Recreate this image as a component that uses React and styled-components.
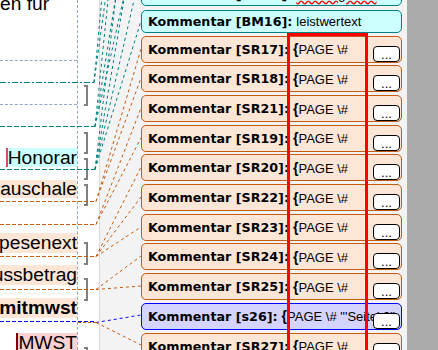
import React from "react";
import styled, { createGlobalStyle } from "styled-components";

// Word-Markup: Dokumentseite links, Kommentar-Sprechblasen rechts

const GlobalStyle = createGlobalStyle`
  html, body {
    margin: 0;
    padding: 0;
  }
  body {
    background: #fff;
    font-family: "Liberation Sans", Arial, sans-serif;
  }
`;

const kinds = {
  teal: { fill: "#ccffff", line: "#008080" },
  orange: { fill: "#fde6d6", line: "#c55a11" },
  blue: { fill: "#d4d4ff", line: "#0000ff" },
};

const Root = styled.div`
  position: relative;
  display: flex;
  width: 438px;
  height: 350px;
  overflow: hidden;
`;

const DocPage = styled.div`
  display: flex;
  flex: none;
  width: 99px;
  background: #fff;
  border-right: 1px solid #d9d9d9;
`;

const TextColumn = styled.div`
  display: flex;
  flex-direction: column;
  width: 77px;
  border-right: 1px dashed #8ea6c8;
  overflow: hidden;
  font-family: "Liberation Sans", Arial, sans-serif;
  font-size: 19.2px;
  color: #000;
`;

const DocLine = styled.div`
  display: flex;
  flex: none;
  justify-content: ${(p) => (p.$left ? "flex-start" : "flex-end")};
  height: ${(p) => p.$h}px;
  margin-top: ${(p) => p.$mt}px;
  white-space: nowrap;
  overflow: hidden;
`;

const Highlight = styled.span`
  flex: none;
  line-height: ${(p) => p.$h}px;
  background: ${(p) => p.$bg || "transparent"};
  font-weight: ${(p) => (p.$bold ? "bold" : "normal")};
  border-left: ${(p) => (p.$mark ? `2px solid ${p.$mark}` : "none")};
`;

const Rule = styled.div`
  flex: none;
  height: 0;
  margin-top: ${(p) => p.$mt}px;
  border-top: 1px dashed #8ea6c8;
`;

const Gutter = styled.div`
  display: flex;
  flex-direction: column;
  width: 21px;
`;

const Bracket = styled.div`
  flex: none;
  width: 2px;
  height: ${(p) => p.$h}px;
  margin: ${(p) => p.$mt}px 0 0 6px;
  border: 2px solid #808080;
  border-left: none;
`;

const Pane = styled.div`
  position: relative;
  flex: 1;
  background: #f3f3f3;
  padding: 0 5px 0 41px;
  overflow: hidden;
`;

const BalloonColumn = styled.div`
  display: flex;
  flex-direction: column;
  gap: 2.7px;
`;

const Balloon = styled.div`
  position: relative;
  z-index: 2;
  display: flex;
  align-items: ${(p) => (p.$cut ? "flex-end" : "center")};
  box-sizing: border-box;
  flex: none;
  height: ${(p) => p.$h}px;
  margin-top: ${(p) => p.$mt || 0}px;
  padding: 0 6px ${(p) => (p.$cut ? 3 : 0)}px 6px;
  background: ${(p) => kinds[p.$kind].fill};
  border: 1px solid ${(p) => kinds[p.$kind].line};
  border-radius: 5px;
  white-space: nowrap;
  overflow: hidden;
`;

const Label = styled.span`
  font-family: "DejaVu Sans", Verdana, sans-serif;
  font-weight: bold;
  font-size: 12.7px;
  color: #000;
`;

const Content = styled.span`
  margin-left: 4px;
  font-family: "Liberation Sans", Arial, sans-serif;
  font-size: 13px;
  color: #000;

  b {
    font-size: 14px;
  }
`;

const Misspelled = styled.span`
  text-decoration: underline wavy #ff0000;
`;

const MoreButton = styled.div`
  position: absolute;
  right: 1px;
  bottom: 0;
  display: flex;
  align-items: flex-end;
  justify-content: center;
  box-sizing: border-box;
  width: 27px;
  height: 16px;
  background: #fff;
  border: 1px solid #000;
  border-radius: 4px;
  font-family: "Liberation Sans", Arial, sans-serif;
  font-size: 13px;
  line-height: 12px;
  color: #000;
`;

const FieldFrame = styled.div`
  position: absolute;
  z-index: 3;
  left: 187px;
  top: 33px;
  box-sizing: border-box;
  width: 81px;
  height: 340px;
  border: 3px solid #ff0000;
  border-bottom: none;
`;

const ScrollArea = styled.div`
  flex: none;
  width: 31px;
  background: #ababab;
`;

const Connectors = styled.svg`
  position: absolute;
  z-index: 1;
  left: 0;
  top: 0;
  pointer-events: none;
`;

const docLines = [
  { text: "en fur", left: true, h: 22, mt: -7 },
  { rule: true, mt: 45 },
  { rule: true, mt: 43 },
  { text: "Honorar", h: 19, mt: 43, bg: kinds.teal.fill, mark: "#d0506a" },
  { text: "Auslagenpauschale", h: 18, mt: 13, bg: kinds.orange.fill },
  { text: "Spesenext", h: 20, mt: 35, bg: kinds.orange.fill },
  { text: "Vorschussbetrag", h: 20, mt: 12, bg: kinds.orange.fill },
  { text: "summemitmwst", h: 20, mt: 13, bg: kinds.orange.fill, bold: true },
  { text: "MWST", h: 19, mt: 15, bg: "#ffd0d0", mark: "#800000" },
];

const brackets = [
  { mt: 85, h: 17 },
  { mt: 26, h: 18 },
  { mt: 4, h: 18 },
  { mt: 4, h: 18 },
  { mt: 36, h: 19 },
  { mt: 13, h: 19 },
  { mt: 46, h: 19 },
];

const field = "PAGE \\#";

const balloons = [
  { id: "BM15", kind: "teal", h: 27, mt: -21, cut: true, wavy: "Leistungswert" },
  { id: "BM16", kind: "teal", h: 23, mt: 1.3, text: "leistwertext" },
  { id: "SR17", kind: "orange", field },
  { id: "SR18", kind: "orange", field },
  { id: "SR21", kind: "orange", field },
  { id: "SR19", kind: "orange", field },
  { id: "SR20", kind: "orange", field },
  { id: "SR22", kind: "orange", field },
  { id: "SR23", kind: "orange", field },
  { id: "SR24", kind: "orange", field },
  { id: "SR25", kind: "orange", field },
  { id: "s26", kind: "blue", field: "PAGE \\# \"'Seite' 0\"" },
  { id: "SR27", kind: "orange", field },
];

const anchors = [
  { y: 82, x: 94, kind: "teal", dash: "6 2 2 2" },
  { y: 126, x: 95, kind: "teal", dash: "5 2" },
  { y: 169, x: 95, kind: "teal", dash: "5 2" },
  { y: 201, x: 96, kind: "orange", dash: "4 2" },
  { y: 224, x: 96, kind: "orange", dash: "4 2" },
  { y: 256, x: 96, kind: "orange", dash: "4 2" },
  { y: 289, x: 96, kind: "orange", dash: "4 2" },
  { y: 321, x: 96, kind: "blue", dash: "4 2" },
];

const links = [
  [94, 82, -420, "teal"],
  [94, 82, -260, "teal"],
  [95, 126, -320, "teal"],
  [95, 126, -160, "teal"],
  [95, 126, -80, "teal"],
  [95, 169, -210, "teal"],
  [95, 169, -100, "teal"],
  [95, 169, -30, "teal"],
  [95, 169, 21, "teal"],
  [96, 201, 49, "orange"],
  [96, 201, 78, "orange"],
  [96, 224, 108, "orange"],
  [96, 224, 138, "orange"],
  [96, 256, 167, "orange"],
  [96, 256, 197, "orange"],
  [96, 256, 227, "orange"],
  [96, 289, 256, "orange"],
  [96, 289, 286, "orange"],
  [96, 322, 315, "blue"],
  [96, 322, 345, "orange"],
];

const App = () => {
  return (
    <>
      <GlobalStyle />
      <Root>
        <DocPage>
          <TextColumn>
            {docLines.map((l, i) =>
              l.rule ? (
                <Rule key={i} $mt={l.mt} />
              ) : (
                <DocLine key={i} $left={l.left} $h={l.h} $mt={l.mt}>
                  <Highlight $h={l.h} $bg={l.bg} $bold={l.bold} $mark={l.mark}>
                    {l.text}
                  </Highlight>
                </DocLine>
              )
            )}
          </TextColumn>
          <Gutter>
            {brackets.map((b, i) => (
              <Bracket key={i} $mt={b.mt} $h={b.h} />
            ))}
          </Gutter>
        </DocPage>

        <Pane>
          <BalloonColumn>
            {balloons.map((b) => (
              <Balloon key={b.id} $kind={b.kind} $h={b.h || 27} $mt={b.mt} $cut={b.cut}>
                <Label>Kommentar [{b.id}]:</Label>
                <Content>
                  {b.wavy && <Misspelled>{b.wavy}</Misspelled>}
                  {b.text}
                  {b.field && (
                    <>
                      <b>{"{"}</b>
                      {b.field}
                    </>
                  )}
                </Content>
                {b.field && <MoreButton>...</MoreButton>}
              </Balloon>
            ))}
          </BalloonColumn>
          <FieldFrame />
        </Pane>

        <ScrollArea />

        <Connectors width="438" height="350" viewBox="0 0 438 350">
          {anchors.map((a) => (
            <line
              key={a.y}
              x1="0"
              y1={a.y + 0.5}
              x2={a.x}
              y2={a.y + 0.5}
              stroke={kinds[a.kind].line}
              strokeWidth="1"
              strokeDasharray={a.dash}
            />
          ))}
          <line x1="78" y1="322.5" x2="96" y2="322.5" stroke={kinds.orange.line} strokeDasharray="3 2" />
          {links.map(([x1, y1, y2, kind], i) => (
            <line
              key={i}
              x1={x1}
              y1={y1 + 0.5}
              x2="141"
              y2={y2}
              stroke={kinds[kind].line}
              strokeWidth="1"
              strokeDasharray="3 3"
            />
          ))}
        </Connectors>
      </Root>
    </>
  );
};

export default App;
